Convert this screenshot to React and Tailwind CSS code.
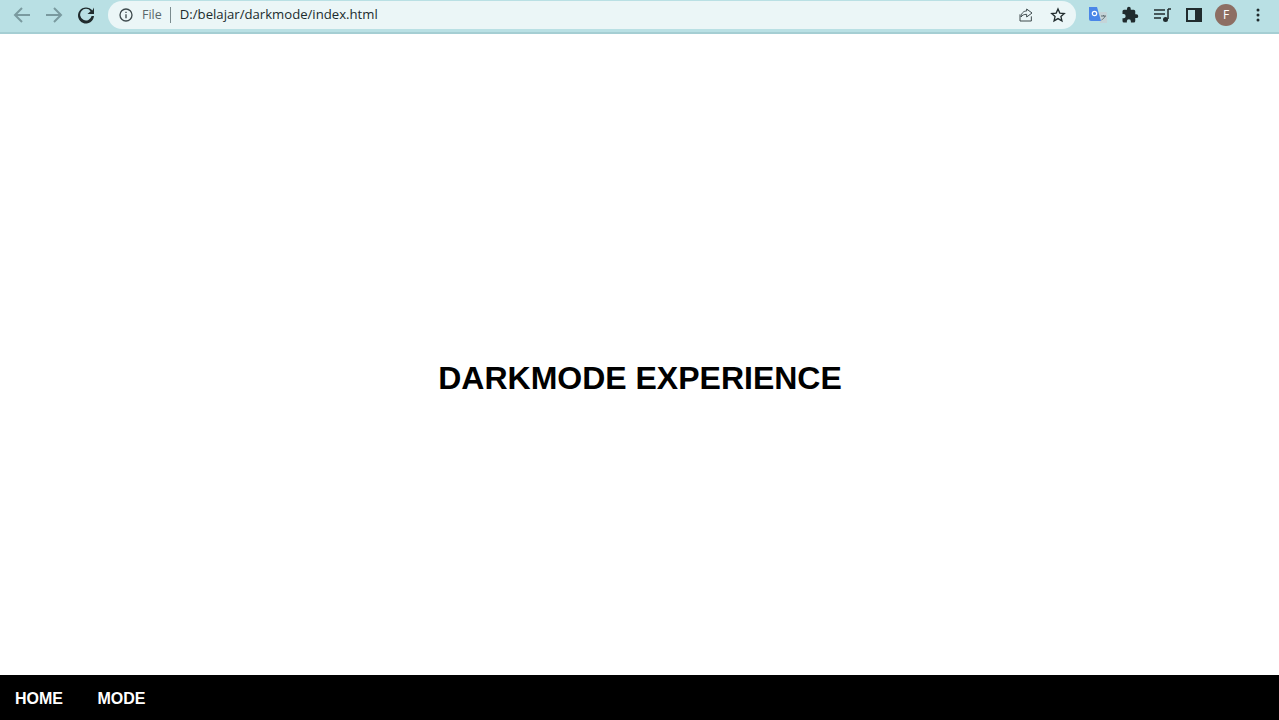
import React from 'react';

const sans = { fontFamily: '"Liberation Sans", Arial, sans-serif' };

function ToolbarIcon({ children, className = 'w-6 h-6', viewBox = '0 0 24 24' }) {
  return (
    <svg viewBox={viewBox} className={className} aria-hidden="true">
      {children}
    </svg>
  );
}

function BrowserBar() {
  return (
    <header className="flex h-[34px] items-start border-b-2 border-[#a5ced3] bg-[#b9e0e4] font-['Open_Sans','Noto_Sans',sans-serif]">
      <div className="flex h-[30px] items-center pl-[10px]">
        <ToolbarIcon>
          <path d="M20 12H5.500M12 5l-7 7 7 7" fill="none" stroke="#7a9a9f" strokeWidth="2" />
        </ToolbarIcon>
        <ToolbarIcon className="ml-2 w-6 h-6">
          <path d="M4 12h14.500M12 5l7 7-7 7" fill="none" stroke="#7a9a9f" strokeWidth="2" />
        </ToolbarIcon>
        <ToolbarIcon className="ml-2 w-6 h-6">
          <path
            d="M18.400 7.600A8 8 0 1 0 20 13h-2.400a5.800 5.800 0 1 1-1-4.800L13.500 11H20V4.500z"
            fill="#202b2d"
          />
        </ToolbarIcon>
      </div>

      <div className="ml-[10px] mt-px flex h-[28px] w-[968px] items-center rounded-full bg-[#ebf6f7] pl-[10px] pr-[10px]">
        <ToolbarIcon className="h-4 w-4">
          <circle cx="12" cy="12" r="9" fill="none" stroke="#3e4a4d" strokeWidth="2" />
          <path d="M12 11v6M12 7v2" fill="none" stroke="#3e4a4d" strokeWidth="2" />
        </ToolbarIcon>
        <span className="ml-[8px] text-[12.500px] text-[#5a686b]">File</span>
        <span className="ml-[8px] h-4 w-px bg-[#7b8b8e]"></span>
        <span className="ml-[9px] text-[13.150px] text-[#202b2d]">D:/belajar/darkmode/index.html</span>
        <div className="ml-auto flex items-center gap-4">
          <ToolbarIcon className="h-4 w-4">
            <path
              d="M3 11v10h17v-7M13 3l8 6-8 6v-4c-4 0-6.500 1-8.500 4 .5-5 3-9 8.500-9z"
              fill="none"
              stroke="#3e4a4d"
              strokeWidth="1.500"
            />
          </ToolbarIcon>
          <ToolbarIcon className="h-4 w-4">
            <path
              d="M12 3l2.700 6.200 6.700.6-5 4.500 1.500 6.600L12 17.400l-5.900 3.500 1.500-6.600-5-4.500 6.700-.6z"
              fill="none"
              stroke="#202b2d"
              strokeWidth="2"
            />
          </ToolbarIcon>
        </div>
      </div>

      <div className="ml-[13px] flex h-[30px] items-center">
        <ToolbarIcon className="h-[18px] w-[18px]" viewBox="0 0 18 18">
          <path d="M8 6h9a1 1 0 0 1 1 1v10H11z" fill="#c4d4d8" />
          <path d="M0 1h8l4 14H2a2 2 0 0 1-2-2z" fill="#4a86e8" />
          <circle cx="5.500" cy="7.500" r="2.200" fill="none" stroke="#ffffff" strokeWidth="1.200" />
          <path d="M12 10h5M14.500 9v1M16 10c-.5 2-2 3-3.500 4" fill="none" stroke="#5f6f73" strokeWidth="1" />
        </ToolbarIcon>
        <ToolbarIcon className="ml-[14px] h-[18px] w-[18px]">
          <path
            d="M20.500 11H19V7a2 2 0 0 0-2-2h-4V3.500a2.500 2.500 0 0 0-5 0V5H4a2 2 0 0 0-2 2v3.800h1.500a2.700 2.700 0 0 1 0 5.400H2V20a2 2 0 0 0 2 2h3.800v-1.500a2.700 2.700 0 0 1 5.400 0V22H17a2 2 0 0 0 2-2v-4h1.500a2.500 2.500 0 0 0 0-5z"
            fill="#202b2d"
          />
        </ToolbarIcon>
        <ToolbarIcon className="ml-[14px] h-[18px] w-[18px]" viewBox="0 0 18 18">
          <path d="M1 4h11M1 8h11M1 12h7" fill="none" stroke="#202b2d" strokeWidth="1.500" />
          <path d="M15 3v10" fill="none" stroke="#202b2d" strokeWidth="1.500" />
          <path d="M15 3h3" fill="none" stroke="#202b2d" strokeWidth="1.500" />
          <circle cx="12.500" cy="13.500" r="2.500" fill="#202b2d" />
        </ToolbarIcon>
        <ToolbarIcon className="ml-[14px] h-[18px] w-[18px]" viewBox="0 0 18 18">
          <path d="M2 3h14v12H2z" fill="none" stroke="#202b2d" strokeWidth="2" />
          <path d="M10 3h6v12h-6z" fill="#202b2d" />
        </ToolbarIcon>
        <div className="ml-[12px] flex h-[22px] w-[22px] items-center justify-center rounded-full bg-[#8d6e63] text-[12px] text-white">
          F
        </div>
        <ToolbarIcon className="ml-[12px] h-[18px] w-[18px]" viewBox="0 0 18 18">
          <circle cx="9" cy="4" r="1.500" fill="#202b2d" />
          <circle cx="9" cy="9" r="1.500" fill="#202b2d" />
          <circle cx="9" cy="14" r="1.500" fill="#202b2d" />
        </ToolbarIcon>
      </div>
    </header>
  );
}

function App() {
  return (
    <div className="min-h-screen bg-white" style={sans}>
      <BrowserBar />
      <main className="flex h-[686px] items-center justify-center pt-0.5 pl-px">
        <h1 className="text-[32px] font-bold text-black">DARKMODE EXPERIENCE</h1>
      </main>
      <nav className="fixed bottom-0 left-0 flex h-[45px] w-full items-center gap-[34.500px] bg-black px-[15px] pt-0.5 text-base font-bold text-white">
        <a href="#home">HOME</a>
        <a href="#mode">MODE</a>
      </nav>
    </div>
  );
}

export default App;
